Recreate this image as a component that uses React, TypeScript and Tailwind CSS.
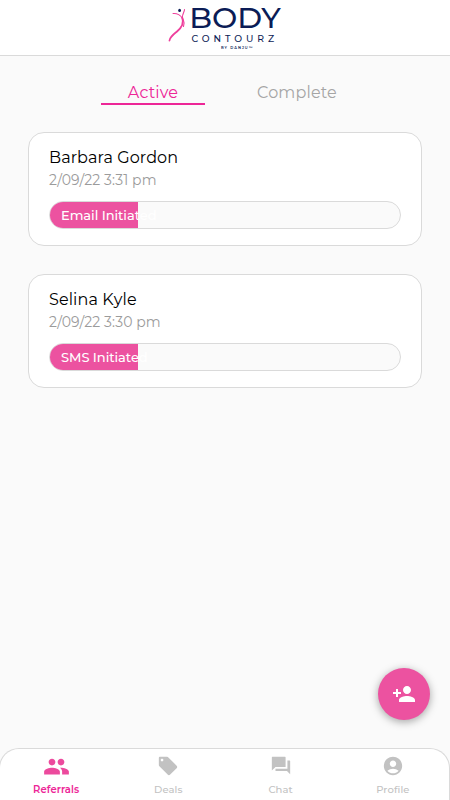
import React, { useState } from 'react';
import { MdPeople, MdAccountCircle, MdPersonAdd } from 'react-icons/md';

interface Referral {
    id: number;
    name: string;
    date: string;
    status: string;
    progress: number;
}

const referrals: Referral[] = [
    { id: 1, name: 'Barbara Gordon', date: '2/09/22 3:31 pm', status: 'Email Initiated', progress: 25 },
    { id: 2, name: 'Selina Kyle', date: '2/09/22 3:30 pm', status: 'SMS Initiated', progress: 25 },
];

const TagIcon: React.FC = () => (
    <svg width="22" height="22" viewBox="0 0 24 24" fill="currentColor">
        <path d="M21.4 11.6l-9-9C12 2.2 11.5 2 11 2H3c-.6 0-1 .4-1 1v8c0 .5.2 1 .6 1.4l9 9c.8.8 2 .8 2.8 0l7-7c.8-.8.8-2 0-2.8zM5.5 7C4.7 7 4 6.3 4 5.5S4.7 4 5.5 4 7 4.7 7 5.5 6.300 7 5.5 7z" />
    </svg>
);

const ChatIcon: React.FC = () => (
    <svg width="22" height="22" viewBox="0 0 24 24" fill="currentColor">
        <path d="M21.5 6H19v9H6v2.5h12.5L22 21V6.5zM17 13V2.500L16.5 2H2.5L2 2.5V17l4-4z" />
    </svg>
);

const navItems = [
    { label: 'Referrals', icon: <MdPeople size={27} /> },
    { label: 'Deals', icon: <TagIcon /> },
    { label: 'Chat', icon: <ChatIcon /> },
    { label: 'Profile', icon: <MdAccountCircle size={22} /> },
];

const Logo: React.FC = () => (
    <svg className="overflow-visible" width="114" height="55" viewBox="168 0 114 55" fontFamily="Montserrat, sans-serif" fill="#0b1c56">
        <ellipse cx="179.6" cy="10.4" rx="1.4" ry="1.7" />
        <g fill="none" stroke="#ee3f9c" strokeLinecap="round">
            <path d="M173 13.5C177 13 181 15.3 182.3 18.5" strokeWidth="1.1" />
            <path d="M182.3 18C184.3 23.5 181.5 27.7 177 31.5C173 34.8 169.8 37 169.5 40.5" strokeWidth="1.8" />
            <path d="M184.5 9.5C184.5 12 182 14.5 182.5 17.5C183 20.5 185.5 22 183.5 26.5" strokeWidth="1.1" />
        </g>
        <text x="189.3" y="27.8" fontSize="28" fontWeight="500" textLength="91.5" lengthAdjust="spacingAndGlyphs">BODY</text>
        <text x="191.5" y="41.7" fontSize="9.3" fontWeight="500" textLength="82.5" lengthAdjust="spacing">CONTOURZ</text>
        <text x="221" y="48.6" fontSize="3.6" fontWeight="600" textLength="31.5" lengthAdjust="spacing">BY DANJU™</text>
    </svg>
);

const ReferralCard: React.FC<{ referral: Referral }> = ({ referral }) => (
    <div className="h-[114px] rounded-2xl border border-[#dadada] bg-white px-5 pt-[13px]">
        <div className="text-base leading-6 tracking-[0.1px] text-black">{referral.name}</div>
        <div className="text-sm leading-[21px] tracking-[0.1px] text-[#9b9b9b]">{referral.date}</div>
        <div className="relative mt-[10px] h-7 overflow-hidden rounded-full border border-[#dadada] bg-[#fafafa]">
            <div className="h-full bg-[#ec52a0]" style={{ width: `${referral.progress}%` }} />
            <span className="absolute inset-y-0 left-[11px] text-[13px] leading-[26px] font-medium tracking-[-0.05px] text-white">
                {referral.status}
            </span>
        </div>
    </div>
);

export default function App() {
    const [tab, setTab] = useState('Active');
    const [page, setPage] = useState('Referrals');

    return (
        <div className="relative flex h-screen flex-col overflow-hidden bg-[#fafafa] font-['Montserrat',sans-serif]">
            <header className="flex h-14 shrink-0 justify-center border-b border-[#dadada] bg-white">
                <Logo />
            </header>

            <div className="flex justify-center gap-10 pt-[25px]">
                {['Active', 'Complete'].map(name => (
                    <button
                        key={name}
                        onClick={() => setTab(name)}
                        className={`h-6 w-[104px] border-b-2 pt-[1px] text-base leading-[21px] tracking-[0.15px] ${tab === name ? 'border-[#ed2697] text-[#ed2697]' : 'border-transparent text-[#a5a5a5]'}`}
                    >
                        {name}
                    </button>
                ))}
            </div>

            <main className="flex flex-1 flex-col gap-7 px-7 pt-[27px]">
                {referrals.map(referral => <ReferralCard key={referral.id} referral={referral} />)}
            </main>

            <button className="absolute top-[668px] right-5 flex size-13 items-center justify-center rounded-full bg-[#ec52a0] text-white shadow-[0_2px_8px_rgba(0,0,0,0.35)]">
                <MdPersonAdd size={24} />
            </button>

            <nav className="-ml-px grid h-[52px] shrink-0 grid-cols-4 rounded-t-[20px] border-x border-t border-[#dadada] bg-white">
                {navItems.map(item => (
                    <button
                        key={item.label}
                        onClick={() => setPage(item.label)}
                        className={`flex flex-col items-center pt-[3px] ${page === item.label ? 'text-[#ec4a9d]' : 'text-[#c2c2c2]'}`}
                    >
                        <span className="flex h-[28px] items-center">{item.icon}</span>
                        <span className={`mt-px text-[10px] leading-[17px] tracking-[0.1px] ${page === item.label ? 'font-semibold text-[#ed2697]' : 'font-medium'}`}>{item.label}</span>
                    </button>
                ))}
            </nav>
        </div>
    );
}
